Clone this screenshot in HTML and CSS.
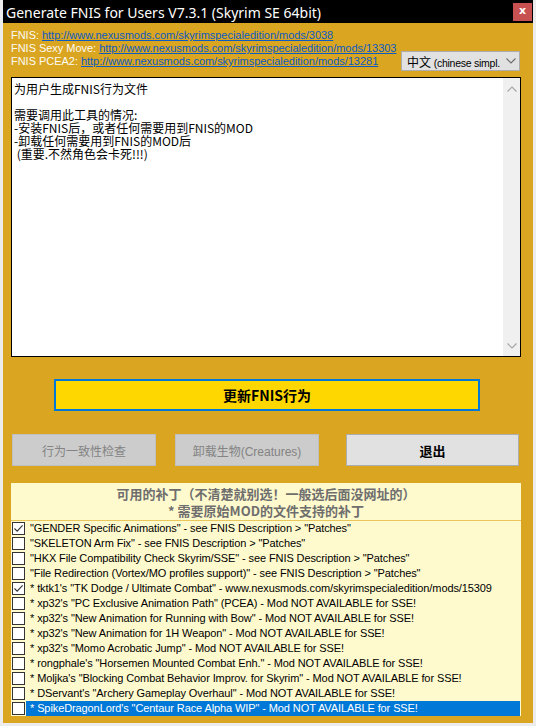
FILE: index.html
```html
<!DOCTYPE html>
<html>
<head>
<meta charset="utf-8">
<title>Generate FNIS for Users</title>
<link rel="stylesheet" href="styles.css">
</head>
<body>
<div class="window">
  <div class="titlebar">
    <span class="title">Generate FNIS for Users V7.3.1 (Skyrim SE 64bit)</span>
    <span class="close">x</span>
  </div>
  <div class="client">
    <div class="top">
      <div class="links">
        <div>FNIS: <a class="link">http://www.nexusmods.com/skyrimspecialedition/mods/3038</a></div>
        <div>FNIS Sexy Move: <a class="link">http://www.nexusmods.com/skyrimspecialedition/mods/13303</a></div>
        <div>FNIS PCEA2: <a class="link">http://www.nexusmods.com/skyrimspecialedition/mods/13281</a></div>
      </div>
      <div class="select">
        <span class="sel-text"><span class="cjk">中文</span> (chinese simpl.</span>
        <svg class="chev" width="10" height="6" viewBox="0 0 10 6"><path d="M0.5 0.5 L5 5 L9.5 0.5" fill="none" stroke="#6a6a6a" stroke-width="1.1"/></svg>
      </div>
    </div>
    <div class="textbox">
      <div class="text">为用户生成FNIS行为文件

需要调用此工具的情况:
-安装FNIS后，或者任何需要用到FNIS的MOD
-卸载任何需要用到FNIS的MOD后
 (重要.不然角色会卡死!!!)</div>
      <div class="scroll">
        <svg width="10" height="6" viewBox="0 0 10 6"><path d="M0.5 5.5 L5 1 L9.5 5.5" fill="none" stroke="#a6a6a6" stroke-width="1.2"/></svg>
        <svg width="10" height="6" viewBox="0 0 10 6"><path d="M0.5 0.5 L5 5 L9.5 0.5" fill="none" stroke="#a6a6a6" stroke-width="1.2"/></svg>
      </div>
    </div>
    <div class="main-row">
      <div class="main-btn">更新FNIS行为</div>
    </div>
    <div class="btn-row">
      <div class="btn disabled b1">行为一致性检查</div>
      <div class="btn disabled b2">卸载生物(Creatures)</div>
      <div class="btn exit">退出</div>
    </div>
    <div class="patches">
      <div class="phead">
        <div class="hl">可用的补丁（不清楚就别选！一般选后面没网址的）</div>
        <div class="hl">* 需要原始MOD的文件支持的补丁</div>
      </div>
      <div class="plist">
        <div class="row"><span class="cb"><svg width="11" height="11" viewBox="0 0 11 11"><path d="M1.5 5.5 L4.2 8.2 L9.6 2.4" fill="none" stroke="#333" stroke-width="1.1"/></svg></span><span class="lbl">"GENDER Specific Animations" - see FNIS Description &gt; "Patches"</span></div>
        <div class="row"><span class="cb"></span><span class="lbl">"SKELETON Arm Fix" - see FNIS Description &gt; "Patches"</span></div>
        <div class="row"><span class="cb"></span><span class="lbl">"HKX File Compatibility Check Skyrim/SSE" - see FNIS Description &gt; "Patches"</span></div>
        <div class="row"><span class="cb"></span><span class="lbl">"File Redirection (Vortex/MO profiles support)" - see FNIS Description &gt; "Patches"</span></div>
        <div class="row"><span class="cb"><svg width="11" height="11" viewBox="0 0 11 11"><path d="M1.5 5.5 L4.2 8.2 L9.6 2.4" fill="none" stroke="#333" stroke-width="1.1"/></svg></span><span class="lbl">* tktk1's "TK Dodge / Ultimate Combat" - www.nexusmods.com/skyrimspecialedition/mods/15309</span></div>
        <div class="row"><span class="cb"></span><span class="lbl">* xp32's "PC Exclusive Animation Path" (PCEA) - Mod NOT AVAILABLE for SSE!</span></div>
        <div class="row"><span class="cb"></span><span class="lbl">* xp32's "New Animation for Running with Bow" - Mod NOT AVAILABLE for SSE!</span></div>
        <div class="row"><span class="cb"></span><span class="lbl">* xp32's "New Animation for 1H Weapon" - Mod NOT AVAILABLE for SSE!</span></div>
        <div class="row"><span class="cb"></span><span class="lbl">* xp32's "Momo Acrobatic Jump" - Mod NOT AVAILABLE for SSE!</span></div>
        <div class="row"><span class="cb"></span><span class="lbl">* rongphale's "Horsemen Mounted Combat Enh." - Mod NOT AVAILABLE for SSE!</span></div>
        <div class="row"><span class="cb"></span><span class="lbl">* Moljka's "Blocking Combat Behavior Improv. for Skyrim" - Mod NOT AVAILABLE for SSE!</span></div>
        <div class="row"><span class="cb"></span><span class="lbl">* DServant's "Archery Gameplay Overhaul" - Mod NOT AVAILABLE for SSE!</span></div>
        <div class="row sel"><span class="cb"></span><span class="lbl">* SpikeDragonLord's "Centaur Race Alpha WIP" - Mod NOT AVAILABLE for SSE!</span></div>
      </div>
    </div>
  </div>
</div>
</body>
</html>
```

FILE: styles.css
```css
html, body {
  margin: 0;
  padding: 0;
}
body {
  background: #ececec;
  width: 536px;
  height: 726px;
  overflow: hidden;
  font-family: "Liberation Sans", Arial, "Noto Sans CJK SC", sans-serif;
}
.window {
  margin-left: 3px;
  width: 530px;
  height: 723px;
  background: #daa520;
  overflow: hidden;
}
.titlebar {
  height: 23px;
  background: #000;
  display: flex;
  justify-content: space-between;
  align-items: flex-start;
}
.title {
  color: #fff;
  font-family: "Noto Sans", "Liberation Sans", sans-serif;
  font-size: 14px;
  line-height: 20px;
  padding: 3px 0 0 3px;
  white-space: nowrap;
}
.close {
  margin: 3px 1px 0 0;
  width: 19px;
  height: 18px;
  background: #c75050;
  color: #fff;
  font-family: "DejaVu Sans", sans-serif;
  font-weight: bold;
  font-size: 11px;
  line-height: 16px;
  text-align: center;
}
.client {
  padding: 6px 12px 6px 8px;
}
.top {
  display: flex;
  justify-content: space-between;
  align-items: flex-start;
}
.links {
  color: #fbfbf5;
  font-size: 11px;
  line-height: 13px;
  letter-spacing: -0.03px;
  white-space: nowrap;
}
.link {
  color: #0a5cc2;
  text-decoration: underline;
}
.select {
  margin-top: 22px;
  margin-right: 1px;
  width: 119px;
  height: 20px;
  box-sizing: border-box;
  border: 1px solid #adadad;
  background: #e1e1e1;
  display: flex;
  align-items: center;
  justify-content: space-between;
  padding: 0 3px 0 5px;
  font-size: 10.5px;
  letter-spacing: -0.25px;
  color: #000;
  white-space: nowrap;
}
.cjk {
  font-family: "Noto Sans CJK SC", sans-serif;
  font-size: 12px;
  letter-spacing: 0;
}
.chev {
  flex: none;
}
.textbox {
  margin-top: 6px;
  height: 280px;
  box-sizing: border-box;
  border: 1px solid #000;
  background: #fff;
  display: flex;
}
.text {
  flex: 1;
  white-space: pre;
  font-family: "Noto Sans CJK SC", sans-serif;
  font-size: 12px;
  line-height: 13px;
  padding: 4px 0 0 2px;
  color: #000;
}
.scroll {
  width: 17px;
  background: #f0f0f0;
  display: flex;
  flex-direction: column;
  justify-content: space-between;
  align-items: center;
  padding: 8px 0 7px;
}
.main-row {
  margin-top: 22px;
  padding-left: 43px;
}
.main-btn {
  width: 426px;
  height: 32px;
  box-sizing: border-box;
  border: 2px solid #0078d7;
  background: #ffd700;
  display: flex;
  align-items: center;
  justify-content: center;
  font-family: "Noto Sans CJK SC", sans-serif;
  font-weight: bold;
  font-size: 14px;
  color: #000;
}
.btn-row {
  margin-top: 23px;
  display: flex;
}
.btn {
  height: 32px;
  box-sizing: border-box;
  display: flex;
  align-items: center;
  justify-content: center;
  font-family: "Liberation Sans", "Noto Sans CJK SC", sans-serif;
  font-size: 12px;
}
.disabled {
  width: 144px;
  background: #cccccc;
  border: 1px solid #bfbfbf;
  color: #838383;
}
.b1 { margin-left: 1px; }
.b2 { margin-left: 19px; }
.exit {
  margin-left: 27px;
  width: 173px;
  background: #e1e1e1;
  border: 1px solid #adadad;
  color: #000;
  font-weight: bold;
  font-size: 13px;
}
.patches {
  margin-top: 17px;
  background: #fffacd;
}
.phead {
  height: 38px;
  box-sizing: border-box;
  padding-top: 2px;
  border-bottom: 1px solid #e9c65a;
  text-align: center;
  font-family: "Noto Sans CJK SC", sans-serif;
  font-weight: bold;
  font-size: 13px;
  color: #6e6e6e;
}
.hl {
  height: 17px;
  line-height: 17px;
  overflow: hidden;
}
.plist {
  padding-right: 1px;
}
.row {
  height: 15px;
  display: flex;
  align-items: center;
}
.cb {
  margin-left: 1px;
  width: 13px;
  height: 13px;
  box-sizing: border-box;
  border: 1px solid #333;
  background: #fff;
  flex: none;
  display: flex;
  align-items: center;
  justify-content: center;
}
.lbl {
  margin-left: 1px;
  flex: 1;
  height: 15px;
  padding-left: 4px;
  font-size: 11px;
  letter-spacing: -0.1px;
  line-height: 15px;
  color: #000;
  white-space: nowrap;
  overflow: hidden;
}
.sel .lbl {
  background: #0078d7;
  color: #fff;
}
```
